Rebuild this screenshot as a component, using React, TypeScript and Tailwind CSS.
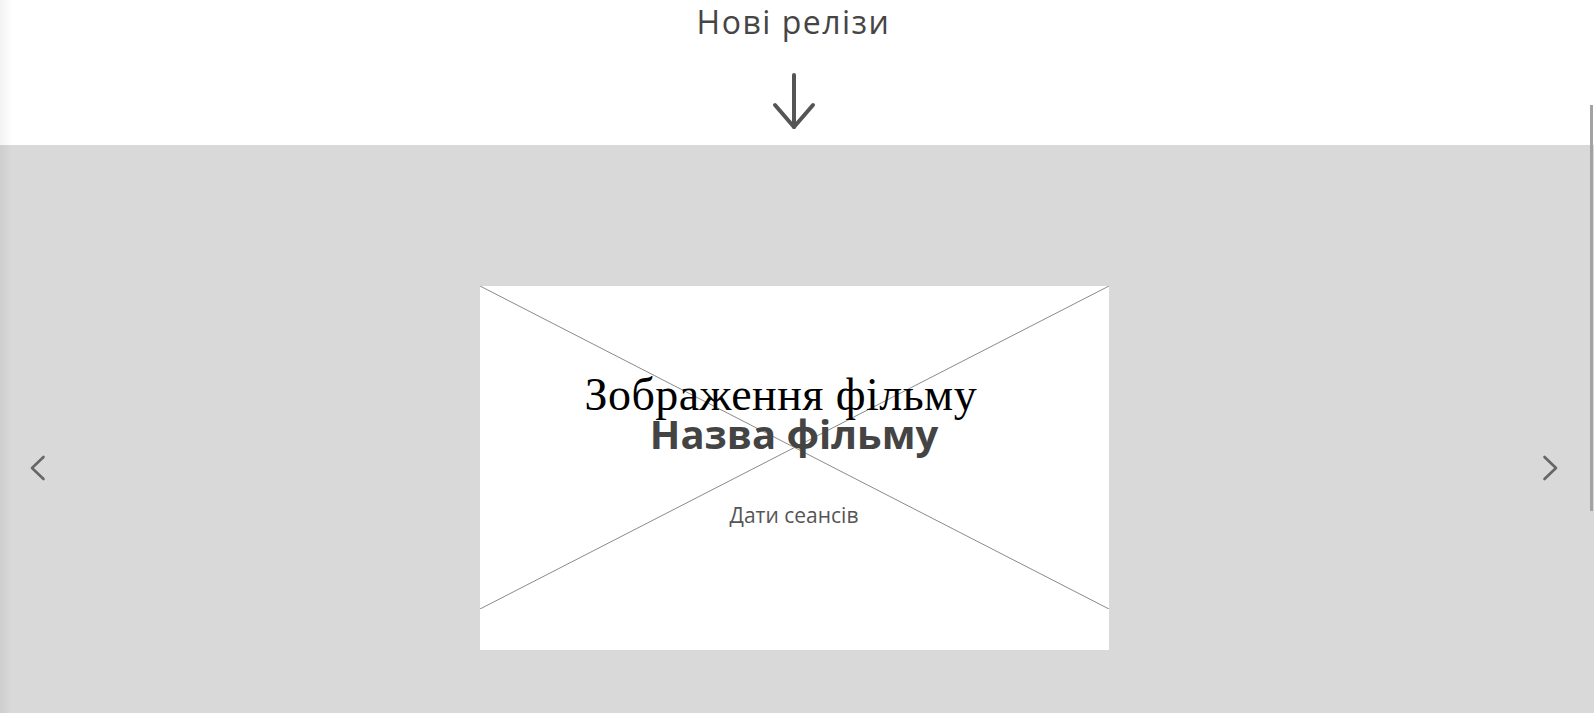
const sans = "font-['Open_Sans','Noto_Sans',sans-serif]";

function ArrowDown() {
	return (
		<svg width="48" height="58" viewBox="0 0 48 58" fill="none" stroke="#555555" strokeWidth={4} strokeLinecap="round" strokeLinejoin="round">
			<path d="M24 3v52" />
			<path d="M5 33l19 22 19-22" />
		</svg>
	);
}

function Chevron({ dir }: { dir: "left" | "right" }) {
	return (
		<svg width="18" height="28" viewBox="0 0 18 28" fill="none" stroke="#666666" strokeWidth={2.6} strokeLinecap="round" strokeLinejoin="round">
			{dir === "left" ? <path d="M14.5 3L3 14l11.5 11" /> : <path d="M3.5 3L15 14 3.5 25" />}
		</svg>
	);
}

function PlaceholderX() {
	return (
		<svg className="absolute left-0 top-0 h-[323px] w-full" viewBox="0 0 629 323" preserveAspectRatio="none" stroke="#8a8a8a" strokeWidth={1}>
			<line x1="0" y1="0" x2="629" y2="323" />
			<line x1="629" y1="0" x2="0" y2="323" />
		</svg>
	);
}

function MovieCard() {
	return (
		<div className="relative h-[364px] w-[629px] shrink-0 bg-white">
			<PlaceholderX />
			<div className="relative flex flex-col items-center pt-[86px]">
				<div className="self-start whitespace-nowrap pl-[105px] font-['Liberation_Serif','Times_New_Roman',serif] text-[46px] leading-none tracking-[0.45px] text-black">
					Зображення фільму
				</div>
				<div className={`${sans} -mt-[4px] text-[40px] font-bold leading-none text-[#444444]`}>Назва фільму</div>
				<div className={`${sans} mt-[51px] text-[21px] leading-none text-[#555555]`}>Дати сеансів</div>
			</div>
		</div>
	);
}

export default function App() {
	return (
		<div className="relative min-h-screen w-full overflow-hidden bg-white">
			{/* header */}
			<section className="flex h-[145px] flex-col items-center pr-[7px]">
				<h2 className={`${sans} mt-[6px] text-[32px] font-normal leading-none tracking-[1.5px] text-[#454545]`}>Нові релізи</h2>
				<div className="mt-[34px]">
					<ArrowDown />
				</div>
			</section>

			{/* carousel */}
			<section className="h-[568px] bg-[#d9d9d9] pr-[7px] pt-[141px]">
				<div className="flex items-center justify-between pl-[29px] pr-[28px]">
					<button className="flex">
						<Chevron dir="left" />
					</button>
					<MovieCard />
					<button className="flex">
						<Chevron dir="right" />
					</button>
				</div>
			</section>

			{/* edge shade + scroll thumb */}
			<div className="pointer-events-none absolute left-0 top-0 h-full w-[12px] bg-gradient-to-r from-black/5 to-transparent" />
			<div className="absolute right-[1px] top-[105px] h-[406px] w-[3px] bg-[#a3a3a3]" />
		</div>
	);
}
